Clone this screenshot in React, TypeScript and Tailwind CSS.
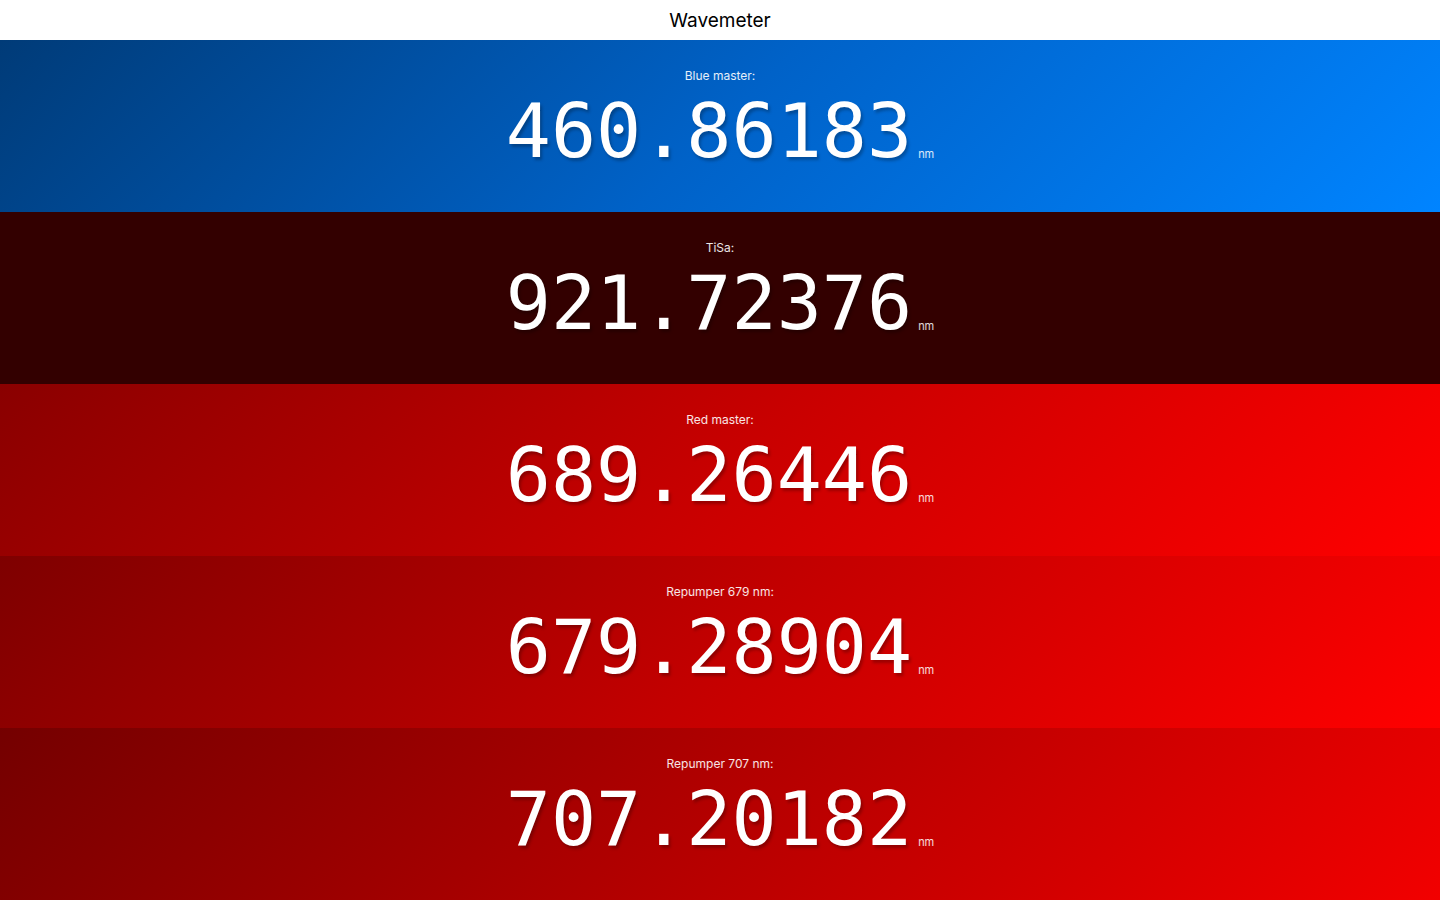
const channels = [
  {
    name: 'Blue master:',
    value: '460.86183',
    bg: 'bg-[linear-gradient(135deg,#003b78_0%,#0062c8_50%,#0084ff_100%)]',
  },
  {
    name: 'TiSa:',
    value: '921.72376',
    bg: 'bg-[#330000]',
  },
  {
    name: 'Red master:',
    value: '689.26446',
    bg: 'bg-[linear-gradient(135deg,#8a0000_0%,#c80000_50%,#ff0000_100%)]',
  },
  {
    name: 'Repumper 679 nm:',
    value: '679.28904',
    bg: 'bg-[linear-gradient(135deg,#7e0000_0%,#c20000_50%,#ff0000_100%)]',
  },
  {
    name: 'Repumper 707 nm:',
    value: '707.20182',
    bg: 'bg-[linear-gradient(135deg,#740000_0%,#b40000_50%,#f20000_100%)]',
  },
];

function Channel({ name, value, bg }: { name: string; value: string; bg: string }) {
  return (
    <div className={`flex-1 flex flex-col items-center pt-[29px] text-white ${bg}`}>
      <div className="text-[12px] leading-[14px] text-white/90 font-['Inter',sans-serif]">{name}</div>
      <div className="mt-[11px] flex items-baseline">
        <span className="text-[75px] leading-none font-['DejaVu_Sans_Mono',monospace] [text-shadow:2px_3px_3px_rgba(0,0,0,0.25)]">
          {value}
        </span>
        <span className="ml-[6px] text-[11px] text-white/85 font-['Inter',sans-serif] translate-y-[1px]">nm</span>
      </div>
    </div>
  );
}

export default function App() {
  return (
    <div className="h-screen flex flex-col bg-white">
      {/* Title bar */}
      <div className="h-[40px] pt-[2px] flex items-center justify-center text-[19px] text-black font-['Inter',sans-serif]">
        Wavemeter
      </div>

      {/* Wavelength rows */}
      <div className="flex-1 flex flex-col">
        {channels.map((c) => (
          <Channel key={c.name} {...c} />
        ))}
      </div>
    </div>
  );
}
